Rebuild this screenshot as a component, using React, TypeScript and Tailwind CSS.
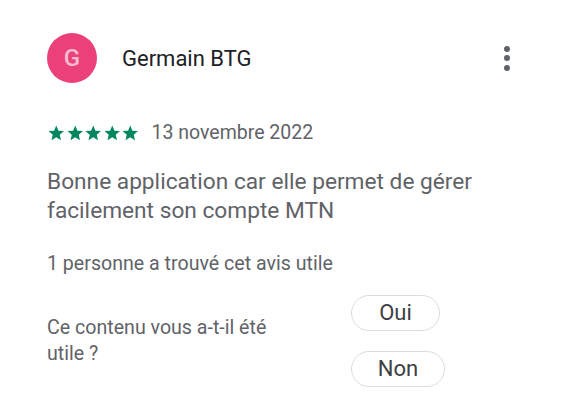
import React from "react";

const Star = () => (
  <svg width="18.5" height="18.5" viewBox="0 0 24 24" className="block">
    <path fill="#01875f" d="M12 17.27L18.18 21l-1.64-7.03L22 9.24l-7.19-.61L12 2 9.19 8.63 2 9.24l5.46 4.73L5.82 21z" />
  </svg>
);

export default function App() {
  return (
    <div className="w-[588px] h-[409px] bg-white overflow-hidden" style={{ fontFamily: "Roboto, 'Noto Sans', sans-serif" }}>
      <div className="pl-[47px] pr-[78px] pt-[33px]">
        <div className="flex items-center h-[50px]">
          <div className="w-[50px] h-[50px] rounded-full bg-[#ec407a] flex items-center justify-center text-[#f8bbd0] text-[24px] font-medium">G</div>
          <div className="ml-[25px] text-[22px] text-[#202124]">Germain BTG</div>
          <div className="ml-auto flex flex-col items-center gap-[3.5px]">
            <span className="w-[6px] h-[6px] rounded-full bg-[#5f6368]" />
            <span className="w-[6px] h-[6px] rounded-full bg-[#5f6368]" />
            <span className="w-[6px] h-[6px] rounded-full bg-[#5f6368]" />
          </div>
        </div>
        <div className="flex items-center mt-[38px] h-[24px]">
          <div className="flex">
            <Star /><Star /><Star /><Star /><Star />
          </div>
          <div className="ml-[12px] text-[19.5px] leading-[24px] text-[#5f6368]">13 novembre 2022</div>
        </div>
        <div className="mt-[22px] text-[22.7px] leading-[29px] text-[#5f6368] w-[440px]">
          Bonne application car elle permet de gérer facilement son compte MTN
        </div>
        <div className="mt-[27px] text-[19.6px] leading-[24px] text-[#5f6368]">1 personne a trouvé cet avis utile</div>
        <div className="flex items-center mt-[19px]">
          <div className="w-[250px] text-[19.6px] leading-[26px] text-[#5f6368]">Ce contenu vous a-t-il été utile ?</div>
          <div className="ml-[54px] flex flex-col gap-[20px]">
            <button className="w-[89px] h-[36px] rounded-full border border-[#dadce0] text-[22px] text-[#3c4043] leading-none">Oui</button>
            <button className="w-[94px] h-[36px] rounded-full border border-[#dadce0] text-[22px] text-[#3c4043] leading-none">Non</button>
          </div>
        </div>
      </div>
    </div>
  );
}
